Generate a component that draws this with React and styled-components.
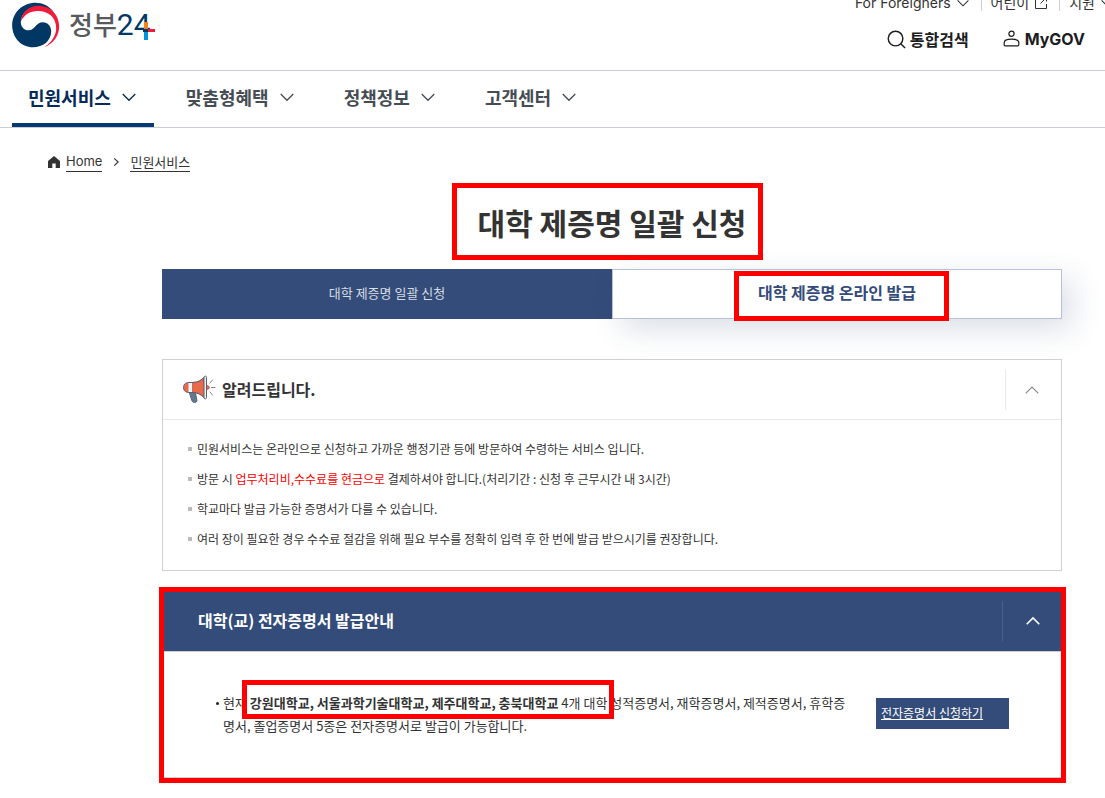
import React from 'react'
import styled, { createGlobalStyle } from 'styled-components'

const GlobalStyle = createGlobalStyle`
  * {
    box-sizing: border-box;
  }
  body {
    margin: 0;
    overflow-x: hidden;
    background: #fff;
    color: #333;
    font-family: 'Noto Sans CJK KR', sans-serif;
    font-size: 13px;
  }
  h1, h2, p, ul {
    margin: 0;
    padding: 0;
  }
  a {
    color: inherit;
    text-decoration: none;
  }
  button {
    padding: 0;
    border: 0;
    background: none;
    color: inherit;
    font: inherit;
    cursor: pointer;
  }
`

const menus = [
  { name: '민원서비스', active: true },
  { name: '맞춤형혜택' },
  { name: '정책정보' },
  { name: '고객센터' },
]

const Chevron = ({ size = 14, up, right, width = 1.3 }) => (
  <svg width={size} height={size} viewBox="0 0 14 14" fill="none" stroke="currentColor" strokeWidth={width} aria-hidden="true">
    <path d={right ? 'M4.5 2 10 7l-5.500 5' : up ? 'M.7 10.3 7 4l6.3 6.3' : 'M.7 4 7 10.3 13.3 4'} />
  </svg>
)

const Emblem = () => (
  <svg width="48" height="46" viewBox="36 4 143 138" aria-hidden="true">
    <path fill="#003764" d="M161 34C146 15 127 6 106 6 68 6 36 35 36 74c0 38 28 66 62 66 31 0 55-19 55-48 0-15-10-27-25-27-21 0-24 24-42 24-15 0-25-12-24-26 2-27 25-45 53-45 18 0 33 6 46 16z" />
    <path fill="#ef1c3b" d="M62 63c1-28 25-48 53-48 36 0 62 27 62 62 0 29-17 52-45 63 24-17 36-36 36-58 0-31-23-51-54-51-25 0-43 12-52 32z" />
  </svg>
)

const Megaphone = () => (
  <svg width="34" height="30" viewBox="0 0 34 30" strokeLinejoin="round" strokeLinecap="round" aria-hidden="true">
    <path d="m7.500 17 6 1 1.500 8c-1 2-4 2-5 0z" fill="#64788c" stroke="#566174" />
    <path d="M9 7.500C4 7 1.500 9 1.500 12.500S4 18 9 17.500z" fill="#e96a4b" stroke="#566174" />
    <path d="M6.500 7.500H11v10H6.500z" fill="#f4f5f7" />
    <path d="M11 7.500c5 0 8-2 11-5v20c-3-3-6-5-11-5z" fill="#e96a4b" stroke="#d05c45" />
    <path d="M6.500 7.500H11c5 0 8-2 11-5M6.500 17.500H11c5 0 8 2 11 5" fill="none" stroke="#566174" />
    <path d="M22 2.500c0-2 2.500-2 2.500 0v20c0 2-2.500 2-2.500 0z" fill="#eef0f4" stroke="#566174" />
    <path d="M25 10.500c3 0 3 4 0 4" fill="#e96a4b" stroke="#b9523c" />
    <path d="m28 8 2.500-3M29.500 12.500h3.500M28 17l2.500 3" fill="none" stroke="#7b8291" />
  </svg>
)

const App = () => (
  <>
    <GlobalStyle />
    <Header>
      <Logo href="#home" aria-label="정부24">
        <Emblem />
        <LogoName>정부</LogoName>
        <LogoNumber>
          24
          <Cross width="12" height="18" viewBox="0 0 12 18" aria-hidden="true">
            <path fill="#f58220" d="M1 0h4v7H1z" />
            <path fill="#003764" d="M0 7h5v3H0z" />
            <path fill="#ef1c3b" d="M5 7h7v3H5z" />
            <path fill="#0095da" d="M1 10h4v8H1z" />
          </Cross>
        </LogoNumber>
      </Logo>
      <HeaderSide>
        <Utilities>
          <Utility type="button">For Foreigners <Chevron size={12} /></Utility>
          <Utility type="button">
            어린이
            <svg width="12" height="12" viewBox="0 0 12 12" fill="none" stroke="currentColor" aria-hidden="true">
              <path d="M5 .5H.5v11h11V7M7.500 .5h4v4M11.500 .5 5.500 6.500" />
            </svg>
          </Utility>
          <Utility type="button">지원 <Chevron size={12} /></Utility>
        </Utilities>
        <Actions>
          <Action type="button">
            <svg width="19" height="19" viewBox="0 0 20 20" fill="none" stroke="currentColor" strokeWidth="1.5" aria-hidden="true">
              <circle cx="9" cy="9" r="7.700" />
              <path d="m14.500 14.500 4.500 4.500" />
            </svg>
            통합검색
          </Action>
          <Action type="button">
            <svg width="18" height="18" viewBox="0 0 18 18" fill="none" stroke="currentColor" strokeWidth="1.2" aria-hidden="true">
              <circle cx="8.500" cy="3.800" r="2.600" />
              <path d="M1.200 14.800v-2c0-2.300 3-3.600 7.300-3.600s7.300 1.300 7.300 3.600v2q0 1-1 1H2.200q-1 0-1-1z" />
            </svg>
            <Latin>MyGOV</Latin>
          </Action>
        </Actions>
      </HeaderSide>
    </Header>
    <Nav>
      {menus.map(menu => (
        <Menu key={menu.name} type="button" $active={menu.active}>
          {menu.name}
          <Chevron />
        </Menu>
      ))}
    </Nav>
    <Breadcrumb aria-label="breadcrumb">
      <HomeLink href="#home">
        <svg width="12" height="12" viewBox="0 0 12 12" fill="#333" aria-hidden="true">
          <path d="M6 0 0 5v7h4.300V7.500h3.400V12H12V5z" />
        </svg>
        <Crumb><Latin>Home</Latin></Crumb>
      </HomeLink>
      <Chevron size={10} right width={1.6} />
      <a href="#service"><Crumb>민원서비스</Crumb></a>
    </Breadcrumb>
    <Main>
      <TitleRow>
        <Title>
          대학 제증명 일괄 신청
          <TitleMark />
        </Title>
      </TitleRow>
      <Tabs>
        <Tab type="button" $active>대학 제증명 일괄 신청</Tab>
        <Tab type="button">
          대학 제증명 온라인 발급
          <TabMark />
        </Tab>
      </Tabs>
      <Notice>
        <NoticeHead>
          <Megaphone />
          <PanelTitle>알려드립니다.</PanelTitle>
          <Toggle type="button" aria-label="접기"><Chevron up width={1.2} /></Toggle>
        </NoticeHead>
        <NoticeList>
          <NoticeItem>민원서비스는 온라인으로 신청하고 가까운 행정기관 등에 방문하여 수령하는 서비스 입니다.</NoticeItem>
          <NoticeItem>방문 시 <Red>업무처리비,수수료를 현금으로</Red> 결제하셔야 합니다.(처리기간 : 신청 후 근무시간 내 3시간)</NoticeItem>
          <NoticeItem>학교마다 발급 가능한 증명서가 다를 수 있습니다.</NoticeItem>
          <NoticeItem>여러 장이 필요한 경우 수수료 절감을 위해 필요 부수를 정확히 입력 후 한 번에 발급 받으시기를 권장합니다.</NoticeItem>
        </NoticeList>
      </Notice>
      <Guide>
        <GuideHead>
          <PanelTitle>대학(교) 전자증명서 발급안내</PanelTitle>
          <Toggle type="button" aria-label="접기" $light><Chevron up width={1.6} /></Toggle>
        </GuideHead>
        <GuideBody>
          <GuideText>
            현재 <strong>강원대학교, 서울과학기술대학교, 제주대학교, 충북대학교</strong> 4개 대학 성적증명서, 재학증명서, 제적증명서, 휴학증명서, 졸업증명서 5종은 전자증명서로 발급이 가능합니다.
            <TextMark />
          </GuideText>
          <Apply href="#apply">전자증명서 신청하기</Apply>
        </GuideBody>
        <GuideMark />
      </Guide>
    </Main>
  </>
)

export default App

const Header = styled.header`
  display: flex;
  justify-content: space-between;
  height: 71px;
  padding: 0 20px 0 12px;
  border-bottom: 1px solid #cdced3;
`
const Logo = styled.a`
  display: flex;
  align-items: center;
  height: 50px;
`
const LogoName = styled.span`
  margin-left: 9px;
  padding-bottom: 2px;
  color: #58595b;
  font-size: 26px;
  font-weight: 500;
  line-height: 38px;
`
const LogoNumber = styled.span`
  position: relative;
  padding-right: 4px;
  color: #003764;
  font-family: Roboto, sans-serif;
  font-size: 30px;
  line-height: 38px;
`
const Cross = styled.svg`
  position: absolute;
  top: 16px;
  right: 0;
`
const HeaderSide = styled.div`
  display: flex;
  flex-direction: column;
  align-items: flex-end;
`
const Utilities = styled.div`
  display: flex;
  align-items: flex-end;
  height: 11px;
  margin-right: -28px;
`
const Utility = styled.button`
  display: flex;
  align-items: center;
  gap: 6px;
  padding: 0 12px 0 9px;
  font-family: Inter, 'Noto Sans CJK KR', sans-serif;
  font-size: 14px;
  line-height: 16px;

  & + & {
    border-left: 1px solid #cdced3;
  }
  &:last-child {
    padding-right: 0;
  }
`
const Actions = styled.div`
  display: flex;
  gap: 34px;
  margin-top: 16px;
`
const Action = styled.button`
  display: flex;
  align-items: center;
  gap: 4px;
  color: #1d1d1f;
  font-size: 16px;
  font-weight: 700;
  line-height: 24px;
`
const Latin = styled.span`
  font-family: Inter, sans-serif;
`
const Nav = styled.nav`
  display: flex;
  gap: 16px;
  height: 57px;
  padding-left: 12px;
  border-bottom: 1px solid #cdced3;
`
const Menu = styled.button`
  display: flex;
  align-items: center;
  gap: 11px;
  padding: 0 18px 0 16px;
  border-bottom: 4px solid ${props => (props.$active ? '#063a74' : 'transparent')};
  color: ${props => (props.$active ? '#052b57' : '#464c53')};
  font-size: 18px;
  font-weight: 700;
`
const Breadcrumb = styled.nav`
  display: flex;
  align-items: center;
  gap: 9px;
  margin-top: 23px;
  padding-left: 48px;
`
const HomeLink = styled.a`
  display: flex;
  align-items: center;
  gap: 6px;
`
const Crumb = styled.span`
  display: block;
  border-bottom: 1px solid #333;
  line-height: 19px;
`
const Main = styled.main`
  padding: 0 43px 24px 162px;
`
const TitleRow = styled.div`
  display: flex;
  justify-content: center;
  margin-top: 30px;
`
const Title = styled.h1`
  position: relative;
  font-size: 30px;
  font-weight: 700;
  line-height: 40px;
`
const Mark = styled.span`
  position: absolute;
  border: 5px solid #f00;
  pointer-events: none;
`
const TitleMark = styled(Mark)`
  inset: -19px -17px -18px -26px;
`
const Tabs = styled.div`
  display: grid;
  grid-template-columns: 1fr 1fr;
  height: 50px;
  margin-top: 27px;
`
const Tab = styled.button`
  position: relative;
  padding-bottom: 4px;
  border: 1px solid ${props => (props.$active ? '#334c79' : '#b7c1dc')};
  background: ${props => (props.$active ? '#334c79' : '#fff')};
  box-shadow: ${props => (props.$active ? 'none' : '10px 10px 30px rgba(51, 76, 121, 0.18)')};
  color: ${props => (props.$active ? '#d6dbe4' : '#334c79')};
  font-size: ${props => (props.$active ? 13 : 16)}px;
  font-weight: ${props => (props.$active ? 400 : 700)};
`
const TabMark = styled(Mark)`
  inset: 1px 112px -3px 121px;
`
const Notice = styled.section`
  position: relative;
  margin-top: 40px;
  border: 1px solid #d0d0d0;
  background: #fff;
`
const NoticeHead = styled.div`
  display: flex;
  align-items: center;
  gap: 6px;
  height: 60px;
  padding-left: 19px;
  border-bottom: 1px solid #e8e8e8;
`
const PanelTitle = styled.h2`
  flex: 1;
  padding-bottom: 2px;
  font-size: 16px;
  font-weight: 700;
`
const Toggle = styled.button`
  display: grid;
  place-items: center;
  width: ${props => (props.$light ? 60 : 56)}px;
  height: 40px;
  padding-right: ${props => (props.$light ? 0 : 4)}px;
  border-left: 1px solid ${props => (props.$light ? '#4a6189' : '#e8e8e8')};
  color: ${props => (props.$light ? '#fff' : '#888')};
`
const NoticeList = styled.ul`
  padding: 14px 24px 16px;
  list-style: none;
`
const NoticeItem = styled.li`
  position: relative;
  padding-left: 10px;
  font-size: 12px;
  line-height: 30px;

  &::before {
    content: '';
    position: absolute;
    top: 13px;
    left: 1px;
    width: 4px;
    height: 4px;
    background: #bbb;
  }
`
const Red = styled.span`
  color: #f00;
`
const Guide = styled.section`
  position: relative;
  margin-top: 20px;
  border-bottom: 1px solid #cdced3;
`
const GuideHead = styled.div`
  display: flex;
  align-items: center;
  height: 61px;
  padding-left: 36px;
  border-bottom: 1px solid #cdced3;
  background: #334c79;
  color: #fff;
`
const GuideBody = styled.div`
  display: flex;
  align-items: flex-start;
  justify-content: space-between;
  gap: 24px;
  min-height: 125px;
  padding: 39px 53px 39px 61px;
`
const GuideText = styled.p`
  position: relative;
  flex: 1;
  line-height: 23px;

  &::before {
    content: '';
    position: absolute;
    top: 11px;
    left: -7px;
    width: 3px;
    height: 3px;
    border-radius: 50%;
    background: #222;
  }
`
const TextMark = styled(Mark)`
  top: -11px;
  left: 19px;
  width: 372px;
  height: 39px;
`
const Apply = styled.a`
  width: 133px;
  height: 31px;
  margin-top: 7px;
  padding-left: 5px;
  background: #334c79;
  color: #fff;
  font-size: 12px;
  line-height: 29px;
  text-decoration: underline;
`
const GuideMark = styled(Mark)`
  inset: -4px -4px -6px -3px;
`
